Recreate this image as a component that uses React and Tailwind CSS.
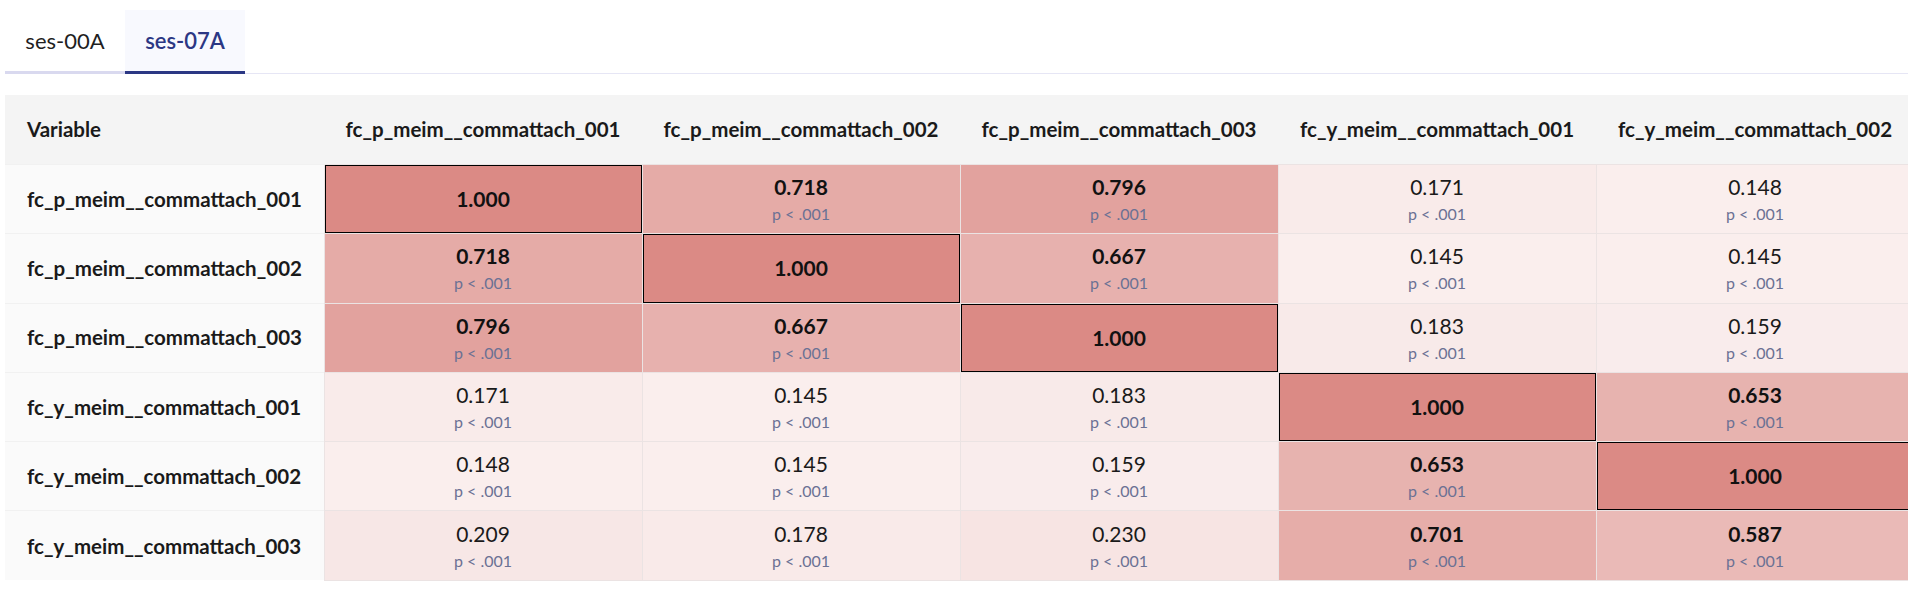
import React, { useState } from "react";

const names = [
  "fc_p_meim__commattach_001",
  "fc_p_meim__commattach_002",
  "fc_p_meim__commattach_003",
  "fc_y_meim__commattach_001",
  "fc_y_meim__commattach_002",
  "fc_y_meim__commattach_003",
];

const colNames = names.slice(0, 5);

const matrix = [
  [1, 0.718, 0.796, 0.171, 0.148],
  [0.718, 1, 0.667, 0.145, 0.145],
  [0.796, 0.667, 1, 0.183, 0.159],
  [0.171, 0.145, 0.183, 1, 0.653],
  [0.148, 0.145, 0.159, 0.653, 1],
  [0.209, 0.178, 0.23, 0.701, 0.587],
];

function cellColor(r) {
  const a = Math.abs(r);
  const R = Math.round(255 - a * 36);
  const G = Math.round(255 - a * 117);
  const B = Math.round(255 - a * 122);
  return `rgb(${R},${G},${B})`;
}

const font = { fontFamily: "Lato, 'Noto Sans', sans-serif" };

export default function App() {
  const [tab, setTab] = useState(1);
  const tabs = ["ses-00A", "ses-07A"];
  return (
    <div className="bg-white pt-[10px] pl-[5px] w-[1908px] h-[604px] overflow-hidden" style={font}>
      <div className="flex border-b border-[#e6e6f5]">
        {tabs.map((t, i) => (
          <button
            key={t}
            onClick={() => setTab(i)}
            className={
              i === tab
                ? "h-[64px] w-[120px] -mb-px border-b-[3px] border-[#2b3784] bg-[#f8f9fe] text-[22px] font-semibold text-[#2b3784] text-center"
                : "h-[64px] w-[120px] -mb-px border-b-[3px] border-[#d9d9ef] text-[22px] text-[#1f1f1f] text-center"
            }
          >
            {t}
          </button>
        ))}
      </div>
      <div className="mt-[21px] overflow-hidden">
        <table className="table-fixed border-collapse w-[1909px]">
          <colgroup>
            <col className="w-[319px]" />
            {colNames.map((n) => (
              <col key={n} className="w-[318px]" />
            ))}
          </colgroup>
          <thead>
            <tr className="h-[69.5px] bg-[#f4f4f4]">
              <th className="text-left pl-[22px] text-[20.5px] font-bold text-[#1a1a1a]">Variable</th>
              {colNames.map((n) => (
                <th key={n} className="text-center text-[20.5px] font-bold text-[#1a1a1a]">
                  {n}
                </th>
              ))}
            </tr>
          </thead>
          <tbody>
            {matrix.map((row, i) => (
              <tr key={names[i]} className="h-[69.3px]">
                <td className="bg-[#fafafa] border-t border-[#f1f1f1] pl-[22px] text-[20.5px] font-bold text-[#1a1a1a]">
                  {names[i]}
                </td>
                {row.map((v, j) => {
                  const diag = i === j;
                  return (
                    <td
                      key={j}
                      className={
                        diag
                          ? "border border-[#ebe3e3] text-center shadow-[inset_0_0_0_1px_#000]"
                          : "border border-[#ebe3e3] text-center"
                      }
                      style={{ backgroundColor: cellColor(v) }}
                    >
                      <div
                        className={
                          v > 0.5
                            ? "text-[21px] leading-[26px] font-bold text-[#111]"
                            : "text-[21px] leading-[26px] text-[#1a1a1a]"
                        }
                      >
                        {v.toFixed(3)}
                      </div>
                      {!diag && (
                        <div className="mt-[4px] text-[16px] leading-[20px] text-[#6b7194]">p &lt; .001</div>
                      )}
                    </td>
                  );
                })}
              </tr>
            ))}
          </tbody>
        </table>
      </div>
    </div>
  );
}
